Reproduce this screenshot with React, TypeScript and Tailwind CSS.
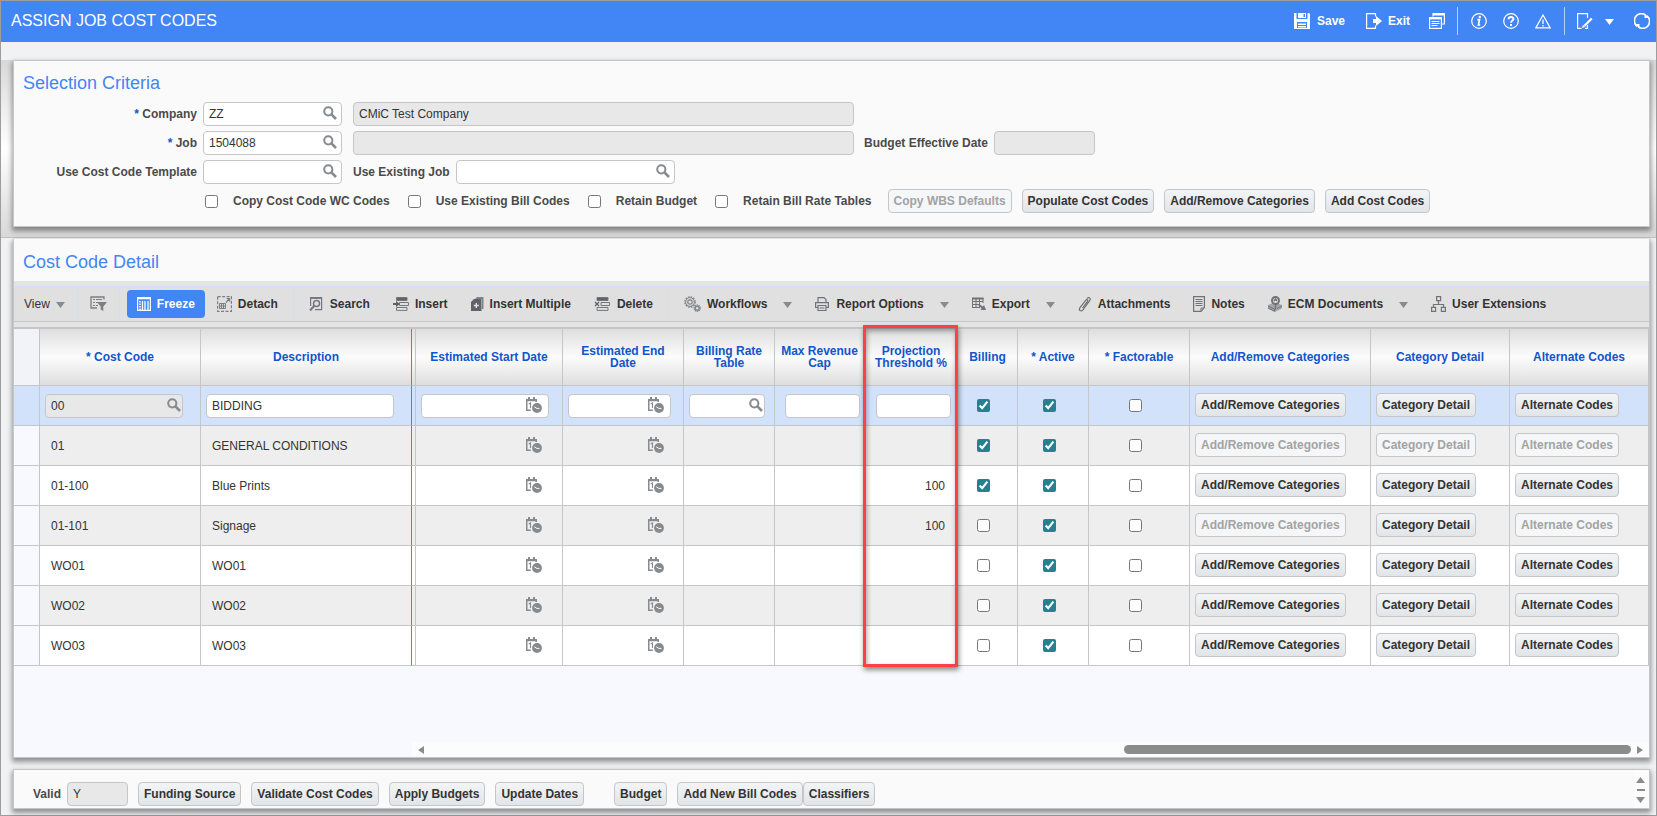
import React from "react";
import clsx from "clsx";

type Row = {
    code: string;
    description: string;
    threshold?: string;
    billing: boolean;
    locked?: boolean;
};

const rows: Row[] = [
    { code: "00", description: "BIDDING", billing: true },
    { code: "01", description: "GENERAL CONDITIONS", billing: true, locked: true },
    { code: "01-100", description: "Blue Prints", threshold: "100", billing: true },
    { code: "01-101", description: "Signage", threshold: "100", billing: false },
    { code: "WO01", description: "WO01", billing: false },
    { code: "WO02", description: "WO02", billing: false },
    { code: "WO03", description: "WO03", billing: false },
];

/* ---------- Icons ---------- */

function SearchIcon() {
    return (
        <svg width="14" height="14" viewBox="0 0 14 14" fill="none" stroke="#868b90">
            <circle cx="5.3" cy="5.3" r="4.1" strokeWidth="2" />
            <path d="M8.2 8.2l4.8 4.8" strokeWidth="2.6" />
        </svg>
    );
}

function CalendarIcon() {
    return (
        <svg width="16" height="16" viewBox="0 0 16 16">
            <path d="M0 2h11v3H9.5V4.300h-8v8.200H4.800V14H0z" fill="#868b90" />
            <path d="M2 0h2v3H2zM7 0h2v3H7z" fill="#868b90" />
            <path d="M2.700 6.900l1.800-.9V11" stroke="#868b90" strokeWidth="1.100" fill="none" />
            <circle cx="11" cy="11" r="4.900" fill="#868b90" />
            <path d="M8.300 9.800l2.500 1.600h2.600" stroke="#fff" strokeWidth="1" fill="none" />
        </svg>
    );
}

function Caret({ className }: { className?: string }) {
    return (
        <svg width="9" height="6" viewBox="0 0 9 6" className={className}>
            <path d="M0 0h9L4.5 6z" fill="currentColor" />
        </svg>
    );
}

function SaveIcon() {
    return (
        <svg width="16" height="16" viewBox="0 0 16 16">
            <path d="M0 0h2.5v6h11V0H15l1 1v15H0z" fill="#fff" />
            <path d="M4 0h8v5H4z" fill="#fff" />
            <path d="M9.5 1h1.5v3H9.5zM3 9h10v6H3z" fill="#4285f4" />
            <path d="M4 10.5h8v1.5H4zM4 13h8v1.5H4z" fill="#fff" />
        </svg>
    );
}

function ExitIcon() {
    return (
        <svg width="16" height="16" viewBox="0 0 16 16">
            <path d="M9.5 3.500V.6H.6v14.8h8.9v-2.900" fill="none" stroke="#fff" strokeWidth="1.2" />
            <path d="M7 6h3V3l6 5-6 5v-3H7z" fill="#fff" />
        </svg>
    );
}

function WindowsIcon() {
    return (
        <svg width="16" height="16" viewBox="0 0 16 16" fill="none" stroke="#fff">
            <path d="M4 3.500V.6h11.400V11H13" strokeWidth="1.200" />
            <path d="M4 1.500h11" strokeWidth="2" />
            <path d="M.6 4.600h11.800v10.800H.6z" strokeWidth="1.200" />
            <path d="M1 5.500h11" strokeWidth="1.800" />
            <path d="M2.500 8.500h8M2.500 10.500h8M2.500 12.500h6" />
        </svg>
    );
}

function InfoIcon() {
    return (
        <svg width="16" height="16" viewBox="0 0 16 16" fill="none" stroke="#fff">
            <circle cx="8" cy="8" r="7.300" strokeWidth="1.200" />
            <path d="M6.300 6.700h2.200L7.400 12h1.800" strokeWidth="1.700" />
            <circle cx="8.800" cy="4" r="1.200" fill="#fff" stroke="none" />
        </svg>
    );
}

function HelpIcon() {
    return (
        <svg width="16" height="16" viewBox="0 0 16 16" fill="none" stroke="#fff">
            <circle cx="8" cy="8" r="7.300" strokeWidth="1.200" />
            <path d="M5.600 6.200c0-3 4.900-2.800 4.900-.2C10.500 7.600 8 7.700 8 9.800" strokeWidth="1.900" />
            <path d="M7 11h2v2H7z" fill="#fff" stroke="none" />
        </svg>
    );
}

function WarningIcon() {
    return (
        <svg width="16" height="16" viewBox="0 0 16 16" fill="none" stroke="#fff">
            <path d="M8 2l7.200 12.900H.8z" strokeWidth="1.200" />
            <path d="M8 6.500v4.500M8 12v1.500" strokeWidth="1.300" />
        </svg>
    );
}

function EditPageIcon() {
    return (
        <svg width="16" height="16" viewBox="0 0 16 16" fill="none" stroke="#fff">
            <path d="M10.500 5V.6H.6v14.800h4" strokeWidth="1.200" />
            <path d="M8 15.400h2.500V12" strokeWidth="1.200" />
            <path d="M14.800 5.500l-7.300 7.300" strokeWidth="2.200" />
            <path d="M6 11.800L5 15l3.200-1z" fill="#fff" stroke="none" />
        </svg>
    );
}

function RefreshIcon() {
    return (
        <svg width="16" height="16" viewBox="0 0 16 16" fill="none" stroke="#fff" strokeWidth="1.700">
            <path d="M3.300 13.400A6.800 6.800 0 0 1 11.500 2" />
            <path d="M12.700 2.600A6.800 6.800 0 0 1 4.500 14" />
            <path d="M.5 11h5v4.500zM15.500 5h-5V.5z" fill="#fff" stroke="none" />
        </svg>
    );
}

function FilterIcon() {
    return (
        <svg width="17" height="16" viewBox="0 0 17 16" fill="none" stroke="#7b7f83">
            <path d="M14 3.500V1H1v11h6" strokeWidth="1.300" />
            <path d="M3 3.500h2m1 0h6M3 6.500h2m1 0h2M3 9.500h2m1 0h2" strokeWidth="1.200" />
            <path d="M7 6h10l-3.700 4.500V15l-2.600-1.500v-3z" fill="#7b7f83" stroke="none" />
        </svg>
    );
}

function FreezeIcon() {
    return (
        <svg width="14" height="14" viewBox="0 0 14 14" fill="none" stroke="#fff">
            <path d="M.6.6h12.800v12.800H.6z" strokeWidth="1.200" />
            <path d="M0 1.500h14" strokeWidth="1.600" />
            <path d="M3 4v9" strokeWidth="1.500" strokeDasharray="1.500 1" />
            <path d="M5.500 4v9M8 4v9M11 4v9" strokeWidth="1.300" />
        </svg>
    );
}

function DetachIcon() {
    return (
        <svg width="15" height="16" viewBox="0 0 15 16" fill="none" stroke="#7b7f83">
            <path d="M.6.6h13.800v14.800H.6z" strokeWidth="1.200" strokeDasharray="3 1.500" />
            <path d="M2.500 7.500h6v5h-6zM2.500 10h6M4.500 7.500v5M6.500 7.500v5" />
            <path d="M9 6.500l3-3.500M9.500 2.500h3v3" strokeWidth="1.200" />
        </svg>
    );
}

function FindIcon() {
    return (
        <svg width="15" height="16" viewBox="0 0 15 16" fill="none" stroke="#74787c">
            <path d="M1.600 10V1.600h11v12H6" strokeWidth="1.200" />
            <path d="M1 2h12" strokeWidth="1.800" />
            <circle cx="7.500" cy="7.500" r="3" strokeWidth="1.500" />
            <path d="M5.300 9.800L1 14.500" strokeWidth="2" />
        </svg>
    );
}

function InsertIcon() {
    return (
        <svg width="16" height="14" viewBox="0 0 16 14" fill="none" stroke="#74787c">
            <path d="M3.500.5h10.500v3H3.500z" fill="#5f6367" />
            <path d="M3.500 13.400v-2.900h10.500v2.900z" />
            <path d="M6.500 5.500h9v3h-9z" />
            <path d="M0 6h3V4l4 3-4 3V8H0z" fill="#5f6367" stroke="none" />
        </svg>
    );
}

function InsertMultipleIcon() {
    return (
        <svg width="13" height="14" viewBox="0 0 13 14">
            <path d="M3 3l3-3h6.500v12H11V2H5z" fill="#808488" />
            <path d="M0 5l3-3h7.500v12H0z" fill="#5f6367" />
            <path d="M5.300 6v5M2.800 8.500h5" stroke="#e0e0e0" strokeWidth="1.400" />
        </svg>
    );
}

function DeleteIcon() {
    return (
        <svg width="17" height="14" viewBox="0 0 17 14" fill="none" stroke="#74787c">
            <path d="M3 .5h11v3H3z" fill="#5f6367" />
            <path d="M3 13.400v-2.900h11v2.900z" />
            <path d="M7 5.500h8.500v3H7z" />
            <path d="M1 5l4 4M5 5L1 9" stroke="#5f6367" strokeWidth="1.300" />
        </svg>
    );
}

function GearsIcon() {
    return (
        <svg width="17" height="16" viewBox="0 0 17 16" fill="none" stroke="#808488">
            <circle cx="6" cy="6" r="5.200" strokeWidth="1.300" strokeDasharray="1.700 1.020" />
            <circle cx="6" cy="6" r="4.300" />
            <circle cx="6" cy="6" r="2.200" strokeWidth="1.200" />
            <circle cx="13.200" cy="12.200" r="3.100" strokeWidth="1.200" strokeDasharray="1.300 .647" />
            <circle cx="13.200" cy="12.200" r="2" strokeWidth="1.400" />
        </svg>
    );
}

function PrintIcon() {
    return (
        <svg width="15" height="14" viewBox="0 0 15 14" fill="none" stroke="#6f7377" strokeWidth="1.200">
            <path d="M3 5V.6h6l2 2V5" />
            <path d="M3 10.500H.6V5.600h12.800v4.900H11" />
            <path d="M3 8.500h8v5H3zM4.500 11h5" />
        </svg>
    );
}

function ExportIcon() {
    return (
        <svg width="14" height="14" viewBox="0 0 14 14" fill="none" stroke="#6f7377">
            <path d="M.5 1.500h10.500M.5 4.500h10.500M.5 7.500h7M.5 10.500h7M.5 1v10M4 1v10M7.500 1v10M11 1v5" />
            <path d="M0 1.500h11.500" strokeWidth="2" />
            <path d="M7 8l4 3" strokeWidth="2" />
            <path d="M14 13H8.500L12 8z" fill="#6f7377" stroke="none" />
        </svg>
    );
}

function ClipIcon() {
    return (
        <svg width="14" height="15" viewBox="0 0 14 15" fill="none" stroke="#6f7377" strokeWidth="1.200">
            <path d="M4.500 11L9.500 4.300c.9-1.300-.7-2.400-1.600-1.100L2 10.700c-1.700 2.600 1 4.500 2.900 2.100l6.800-9.200C13.400 1.200 10.600-.6 8.900 1.700" />
        </svg>
    );
}

function NotesIcon() {
    return (
        <svg width="12" height="16" viewBox="0 0 12 16" fill="none" stroke="#6f7377">
            <path d="M.6.600h10.800v11L8 15.400H.6z" strokeWidth="1.200" />
            <path d="M2.500 3.500h7M2.500 5.500h7M2.500 7.500h7M2.500 9.500h7M8 15v-3h3" />
        </svg>
    );
}

function EcmIcon() {
    return (
        <svg width="14" height="16" viewBox="0 0 14 16" fill="none" stroke="#6f7377">
            <path d="M0 9l7-3 7 3v3.500L7 16l-7-3.500z" fill="#a5a8ab" stroke="none" />
            <path d="M0 10l6.500 3v2.500M0 12l6 3M14 10l-5 2.500" />
            <circle cx="7.500" cy="4.500" r="3.500" strokeWidth="2" fill="#e0e0e0" />
            <path d="M6 5l1.500-2L9 5M7.500 8.500v5" strokeWidth="1.500" />
        </svg>
    );
}

function OrgIcon() {
    return (
        <svg width="15" height="16" viewBox="0 0 15 16" fill="none" stroke="#6f7377" strokeWidth="1.200">
            <path d="M5.600.600h4v4h-4zM.6 11.400h4v4h-4zM10.400 11.400h4v4h-4z" />
            <path d="M7.500 5v3.500M2.500 11V8.500h10V11" />
        </svg>
    );
}

/* ---------- Controls ---------- */

function Button({ children, disabled }: { children: React.ReactNode; disabled?: boolean }) {
    return (
        <button
            type="button"
            disabled={disabled}
            className={clsx(
                "block h-6 shrink-0 whitespace-nowrap rounded border border-[#c4c6c8] px-[5px] text-xs font-bold",
                disabled ? "bg-[#f4f6f8] text-[#a3a3a3]" : "bg-linear-to-b from-[#f3f4f5] to-[#e1e5e9] text-[#333]"
            )}
        >
            {children}
        </button>
    );
}

type FieldProps = {
    id?: string;
    label?: string;
    value?: string;
    readOnly?: boolean;
    icon?: "search" | "calendar";
    tight?: boolean;
    className?: string;
};

function Field({ id, label, value = "", readOnly, icon, tight, className }: FieldProps) {
    return (
        <div
            className={clsx(
                "flex h-6 items-center rounded border border-[#c4c6c8]",
                readOnly ? "bg-[#e8e8e8]" : "bg-white",
                icon === "calendar" ? "pr-1.5" : tight ? "pr-px" : "pr-1",
                className
            )}
        >
            <input
                id={id}
                aria-label={label}
                defaultValue={value}
                readOnly={readOnly}
                className="min-w-0 flex-1 pl-[5px] text-xs text-[#333] outline-none"
            />
            {icon && (
                <button type="button" aria-label={icon === "search" ? "Search values" : "Select date"} className="pb-0.5">
                    {icon === "search" ? <SearchIcon /> : <CalendarIcon />}
                </button>
            )}
        </div>
    );
}

function Label({ htmlFor, required, children, className }: { htmlFor: string; required?: boolean; children: React.ReactNode; className?: string }) {
    return (
        <label htmlFor={htmlFor} className={clsx("shrink-0 whitespace-nowrap text-xs font-bold text-[#4a4a4a]", className)}>
            {required && <span className="text-[#1558c8]">* </span>}
            {children}
        </label>
    );
}

function CheckOption({ id, label }: { id: string; label: string }) {
    return (
        <div className="flex shrink-0 items-center gap-[15px]">
            <input id={id} type="checkbox" className="size-[13px]" />
            <Label htmlFor={id}>{label}</Label>
        </div>
    );
}

function ToolItem({ icon, label, menu }: { icon: React.ReactNode; label: string; menu?: boolean }) {
    return (
        <button type="button" className="flex shrink-0 items-center gap-1.5 whitespace-nowrap text-xs font-bold text-[#333]">
            {icon}
            {label}
            {menu && <Caret className="ml-2.5 mt-0.5 text-[#868b90]" />}
        </button>
    );
}

function ToolDivider() {
    return <div className="h-8 w-px shrink-0 bg-[#d5dfec]" />;
}

/* ---------- Sections ---------- */

function Header() {
    return (
        <header className="flex h-[41px] shrink-0 items-center bg-[#4285f4] pb-0.5 pl-2.5 pr-1.5 text-white">
            <h1 className="flex-1 text-base">ASSIGN JOB COST CODES</h1>
            <div className="flex items-center gap-[21px] text-xs font-bold">
                <button type="button" className="flex items-center gap-[7px]"><SaveIcon /> Save</button>
                <button type="button" className="flex items-center gap-[6px]"><ExitIcon /> Exit</button>
                <button type="button" aria-label="Related screens" className="-ml-0.5"><WindowsIcon /></button>
            </div>
            <div className="ml-3 flex h-7 items-center gap-4 border-x border-white/60 px-[13px]">
                <button type="button" aria-label="Information"><InfoIcon /></button>
                <button type="button" aria-label="Help"><HelpIcon /></button>
                <button type="button" aria-label="Warnings"><WarningIcon /></button>
            </div>
            <div className="ml-3 flex items-center">
                <button type="button" aria-label="Edit options" className="flex items-center gap-3"><EditPageIcon /> <Caret className="mt-0.5" /></button>
                <button type="button" aria-label="Refresh" className="ml-5"><RefreshIcon /></button>
            </div>
        </header>
    );
}

function SelectionCriteria() {
    return (
        <section className="border-b border-[#c0c0c0] bg-linear-to-b from-[#d8d8d8] via-white to-[#d8d8d8] pb-2.5 pl-3 pr-1.5">
            <div className="border border-[#c4c6c8] bg-[#fafafa] pb-[13px] pl-[9px] pt-2.5 shadow-[0_3px_5px_1px_rgba(0,0,0,0.4)]">
                <h2 className="mb-[7px] text-lg leading-6 text-[#4285f4]">Selection Criteria</h2>
                <div className="flex flex-col gap-[5px]">
                    <div className="flex items-center">
                        <Label htmlFor="company" required className="mr-1.5 w-[174px] text-right">Company</Label>
                        <Field id="company" value="ZZ" icon="search" className="w-[139px]" />
                        <Field label="Company name" value="CMiC Test Company" readOnly className="ml-[11px] w-[501px]" />
                    </div>
                    <div className="flex items-center">
                        <Label htmlFor="job" required className="mr-1.5 w-[174px] text-right">Job</Label>
                        <Field id="job" value="1504088" icon="search" className="w-[139px]" />
                        <Field label="Job name" readOnly className="ml-[11px] w-[501px]" />
                        <Label htmlFor="budget-date" className="ml-2.5 mr-1.5">Budget Effective Date</Label>
                        <Field id="budget-date" readOnly className="w-[101px]" />
                    </div>
                    <div className="flex items-center">
                        <Label htmlFor="template" className="mr-1.5 w-[174px] text-right">Use Cost Code Template</Label>
                        <Field id="template" icon="search" className="w-[139px]" />
                        <Label htmlFor="existing-job" className="ml-[11px] mr-1.5">Use Existing Job</Label>
                        <Field id="existing-job" icon="search" className="w-[219px]" />
                    </div>
                    <div className="flex items-center pl-[182px]">
                        <div className="flex gap-[18px]">
                            <CheckOption id="copy-wc" label="Copy Cost Code WC Codes" />
                            <CheckOption id="use-bill" label="Use Existing Bill Codes" />
                            <CheckOption id="retain-budget" label="Retain Budget" />
                            <CheckOption id="retain-rate" label="Retain Bill Rate Tables" />
                        </div>
                        <div className="ml-4 flex gap-2.5">
                            <Button disabled>Copy WBS Defaults</Button>
                            <Button>Populate Cost Codes</Button>
                            <Button>Add/Remove Categories</Button>
                            <Button>Add Cost Codes</Button>
                        </div>
                    </div>
                </div>
            </div>
        </section>
    );
}

function Toolbar() {
    return (
        <div className="border-y-[5px] border-[#e4e4e4]">
            <div className="flex h-9 items-center border-b border-t border-b-[#c6c6c6] border-t-[#cfe0fb] bg-[#e0e0e0] pl-2.5">
                <button type="button" className="flex items-center gap-1.5 text-xs text-[#333]">
                    View <Caret className="mt-0.5 text-[#868b90]" />
                </button>
                <div className="ml-3 flex items-center gap-3">
                    <ToolDivider />
                    <button type="button" aria-label="Query by example"><FilterIcon /></button>
                    <ToolDivider />
                </div>
                <button type="button" className="ml-[7px] flex h-7 items-center gap-1.5 rounded bg-[#4285f4] px-2.5 text-xs font-bold text-white">
                    <FreezeIcon /> Freeze
                </button>
                <div className="ml-3 flex items-center gap-[15px]">
                    <ToolItem icon={<DetachIcon />} label="Detach" />
                    <ToolDivider />
                    <div className="flex gap-[23px]">
                        <ToolItem icon={<FindIcon />} label="Search" />
                        <ToolItem icon={<InsertIcon />} label="Insert" />
                        <ToolItem icon={<InsertMultipleIcon />} label="Insert Multiple" />
                        <ToolItem icon={<DeleteIcon />} label="Delete" />
                    </div>
                    <ToolDivider />
                    <div className="flex gap-[23px]">
                        <ToolItem icon={<GearsIcon />} label="Workflows" menu />
                        <ToolItem icon={<PrintIcon />} label="Report Options" menu />
                        <ToolItem icon={<ExportIcon />} label="Export" menu />
                        <ToolItem icon={<ClipIcon />} label="Attachments" />
                        <ToolItem icon={<NotesIcon />} label="Notes" />
                        <ToolItem icon={<EcmIcon />} label="ECM Documents" menu />
                        <ToolItem icon={<OrgIcon />} label="User Extensions" />
                    </div>
                </div>
            </div>
        </div>
    );
}

function HeadCell({ children, className }: { children?: React.ReactNode; className?: string }) {
    return (
        <th
            className={clsx(
                "h-[57px] border-b border-r border-[#c4c6c8] bg-linear-to-b from-[#dedede] via-[#fcfcfc] to-[#dedede] px-1 text-center text-xs leading-3 font-bold text-[#1155cc]",
                className
            )}
        >
            {children}
        </th>
    );
}

const cell = "h-10 border-b border-r border-[#c4c6c8] p-0";

function CostCodeRow({ row, index }: { row: Row; index: number }) {
    const selected = index === 0;
    return (
        <tr className={clsx("text-xs text-[#333]", selected ? "bg-[#d3e2fb]" : index % 2 ? "bg-[#eeeeee]" : "bg-white")}>
            <td className={clsx(cell, !selected && "bg-[#f7f9fe]")} />
            <td className={cell}>
                {selected ? (
                    <Field label="Cost Code" value={row.code} icon="search" tight readOnly className="ml-[5px] w-[138px]" />
                ) : (
                    <span className="pl-[11px]">{row.code}</span>
                )}
            </td>
            <td className={clsx(cell, "border-r-[#4285f4]")}>
                {selected ? (
                    <Field label="Description" value={row.description} className="ml-[5px] w-[188px]" />
                ) : (
                    <span className="pl-[11px]">{row.description}</span>
                )}
            </td>
            <td className={cell} />
            {["Estimated Start Date", "Estimated End Date"].map((name, i) => (
                <td key={name} className={clsx(cell, "pl-[5px]", i === 0 ? "pr-[13px]" : "pr-3")}>
                    {selected ? (
                        <Field label={name} icon="calendar" />
                    ) : (
                        <button type="button" aria-label={name} className="ml-auto mr-[7px] block pb-0.5">
                            <CalendarIcon />
                        </button>
                    )}
                </td>
            ))}
            <td className={cell}>{selected && <Field label="Billing Rate Table" icon="search" tight className="ml-[5px] w-[76px]" />}</td>
            <td className={cell}>{selected && <Field label="Max Revenue Cap" className="ml-auto mr-1 w-[75px]" />}</td>
            <td className={clsx(cell, "text-right")}>
                {selected ? (
                    <Field label="Projection Threshold %" className="ml-auto mr-1.5 w-[75px]" />
                ) : (
                    <span className="pr-3">{row.threshold}</span>
                )}
            </td>
            {[
                { name: "Billing", on: row.billing },
                { name: "Active", on: true },
                { name: "Factorable", on: false },
            ].map(c => (
                <td key={c.name} className={clsx(cell, "pr-2")}>
                    <input
                        type="checkbox"
                        aria-label={`${c.name} ${row.code}`}
                        defaultChecked={c.on}
                        className="mx-auto block size-[13px] accent-[#26808f]"
                    />
                </td>
            ))}
            {["Add/Remove Categories", "Category Detail", "Alternate Codes"].map((name, i) => (
                <td key={name} className={clsx(cell, "pb-0.5 pl-[5px]")}>
                    <Button disabled={row.locked || (row.code === "01-101" && i !== 1)}>{name}</Button>
                </td>
            ))}
        </tr>
    );
}

function CostCodeDetail() {
    return (
        <section className="mb-[11px] ml-3 mr-1.5 mt-px flex flex-1 flex-col border border-t-0 border-[#c4c6c8] bg-[#f8f9fe] shadow-[0_3px_5px_1px_rgba(0,0,0,0.4)]">
            <div className="flex h-[42px] items-center bg-[#fafafa] pl-[9px] pt-1">
                <h2 className="text-lg leading-6 text-[#4285f4]">Cost Code Detail</h2>
            </div>
            <Toolbar />
            <div className="flex-1 border-t-2 border-[#c6c6c6]">
                <table className="w-full table-fixed border-separate border-spacing-0">
                    <colgroup>
                        <col className="w-[26px]" />
                        <col className="w-[161px]" />
                        <col className="w-[211px]" />
                        <col className="w-1" />
                        <col className="w-[147px]" />
                        <col className="w-[121px]" />
                        <col className="w-[91px]" />
                        <col className="w-[90px]" />
                        <col className="w-[93px]" />
                        <col className="w-[60px]" />
                        <col className="w-[71px]" />
                        <col className="w-[101px]" />
                        <col className="w-[181px]" />
                        <col className="w-[139px]" />
                        <col />
                    </colgroup>
                    <thead>
                        <tr>
                            <td className="border-b border-r border-[#c4c6c8] bg-[#f2f3f8]" />
                            <HeadCell>* Cost Code</HeadCell>
                            <HeadCell className="border-r-[#4285f4]">Description</HeadCell>
                            <td className="border-b border-r border-[#c4c6c8] bg-linear-to-b from-[#dedede] via-[#fcfcfc] to-[#dedede] p-0" />
                            <HeadCell>Estimated Start Date</HeadCell>
                            <HeadCell>Estimated End Date</HeadCell>
                            <HeadCell>Billing Rate Table</HeadCell>
                            <HeadCell>Max Revenue Cap</HeadCell>
                            <HeadCell className="relative">
                                Projection Threshold %
                                {/* callout around the whole column */}
                                <div className="pointer-events-none absolute -left-0.5 -right-px -top-1 z-10 h-[342px] border-3 border-[#fb4145] shadow-[1px_3px_5px_rgba(0,0,0,0.45),inset_1px_3px_5px_rgba(0,0,0,0.35)]" />
                            </HeadCell>
                            <HeadCell>Billing</HeadCell>
                            <HeadCell>* Active</HeadCell>
                            <HeadCell>* Factorable</HeadCell>
                            <HeadCell>Add/Remove Categories</HeadCell>
                            <HeadCell>Category Detail</HeadCell>
                            <HeadCell>Alternate Codes</HeadCell>
                        </tr>
                    </thead>
                    <tbody>
                        {rows.map((row, i) => (
                            <CostCodeRow key={row.code} row={row} index={i} />
                        ))}
                    </tbody>
                </table>
            </div>
            <div className="ml-[398px] flex h-[15px] items-center justify-between bg-[#fcfcfc] px-1.5 text-[#8b8b8b]">
                <svg width="6" height="8" viewBox="0 0 6 8"><path d="M6 0v8L0 4z" fill="currentColor" /></svg>
                <div className="ml-auto mr-1.5 h-[9px] w-[507px] rounded-full bg-[#8b8b8b]" />
                <svg width="6" height="8" viewBox="0 0 6 8"><path d="M0 0v8l6-4z" fill="currentColor" /></svg>
            </div>
        </section>
    );
}

function Footer() {
    return (
        <footer className="mb-1.5 ml-3 mr-1.5 flex h-10 shrink-0 items-end border border-[#c4c6c8] bg-[#fafafa] pl-[19px] shadow-[0_3px_5px_1px_rgba(0,0,0,0.4)]">
            <div className="flex flex-1 items-center pb-0.5">
                <Label htmlFor="valid" className="mr-1.5">Valid</Label>
                <Field id="valid" value="Y" readOnly className="w-[61px]" />
                <div className="ml-2.5 flex gap-2.5">
                    <Button>Funding Source</Button>
                    <Button>Validate Cost Codes</Button>
                    <Button>Apply Budgets</Button>
                    <Button>Update Dates</Button>
                </div>
                <div className="ml-[30px] flex">
                    <Button>Budget</Button>
                    <div className="ml-2.5 flex">
                        <Button>Add New Bill Codes</Button>
                        <Button>Classifiers</Button>
                    </div>
                </div>
            </div>
            <div className="flex h-full w-[15px] flex-col items-center justify-center gap-1.5 bg-[#fcfcfc] pr-0.5 pt-0.5 text-[#8b8b8b]">
                <svg width="9" height="6" viewBox="0 0 9 6"><path d="M0 6h9L4.500 0z" fill="currentColor" /></svg>
                <div className="h-0.5 w-2 bg-[#8b8b8b]" />
                <Caret />
            </div>
        </footer>
    );
}

export default function App() {
    return (
        <div className="flex min-h-screen flex-col border border-[#9d9d9d] bg-[#f1f2f4] font-['Liberation_Sans',Arial,sans-serif]">
            <Header />
            <div className="h-[18px] shrink-0" />
            <SelectionCriteria />
            <CostCodeDetail />
            <Footer />
        </div>
    );
}
